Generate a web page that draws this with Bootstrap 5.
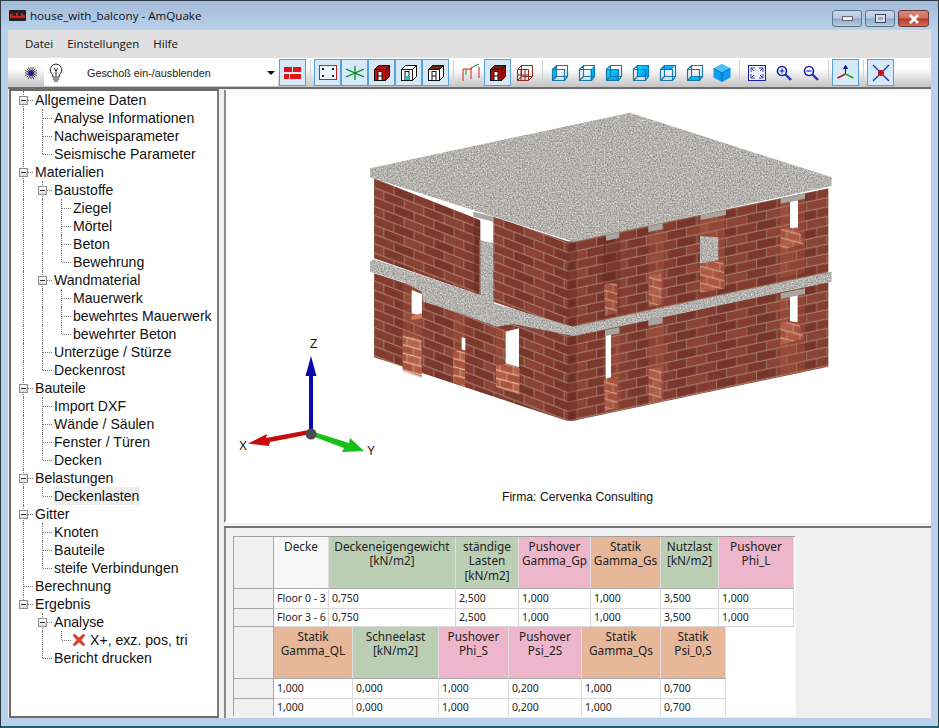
<!DOCTYPE html>
<html lang="de">
<head>
  <meta charset="UTF-8" />
  <title>house_with_balcony - AmQuake</title>
  <link href="https://cdn.jsdelivr.net/npm/bootstrap@5.3.0/dist/css/bootstrap.min.css" rel="stylesheet" />
  <style>
    html, body { height: 100%; margin: 0; background: #3a4048; overflow: hidden; }
    .app-win { width: 939px; height: 728px; background: #b9d1ea; border: 1px solid #2c3a44; border-radius: 6px 6px 0 0; border-bottom: 2px solid #1f5f73; }
    .title-bar { height: 29px; flex: none; padding: 0 9px 0 8px; background: linear-gradient(#a3bbd8, #b9d1ea); font: 11.6px "Open Sans", sans-serif; color: #111; }
    .win-btn { height: 17px; border: 1px solid #5c7388; border-radius: 3px; background: linear-gradient(#c8d8ea 0, #b4c8de 48%, #8ea9c6 52%, #b4cce4 100%); }
    .win-btn.b-close { width: 31px; margin-left: 3px; background: linear-gradient(#dc8a7c 0, #cf6b5c 48%, #b8392b 52%, #cf6a50 100%); border-color: #6b3a36; }
    .win-btn.b-norm { width: 30px; margin-left: 3px; }
    .client { margin: 0 7px 8px; flex: 1; min-height: 0; background: #f0f0f0; }
    .menu-bar { height: 28px; flex: none; background: #e0e0e0; padding: 0 0 2px 17px; gap: 14px; font: 11.5px "Open Sans", sans-serif; color: #111; }
    .tool-bar { height: 31px; flex: none; background: linear-gradient(#fff 0, #fff 35%, #c4c4c4 100%); border-bottom: 2px solid #6e6e6e; padding: 0 0 0 13px; }
    .tool-cell { width: 27px; height: 27px; flex: none; display: flex; align-items: center; justify-content: center; border: 1px solid transparent; }
    .tool-cell.on { background: #d6e9f9; border-color: #5a9fe0; }
    .tool-sep { width: 1px; height: 26px; background: #d2d2d2; flex: none; margin: 0 3px 0 4px; }
    .bug-icon { margin-left: 3px; flex: none; }
    .floor-combo { width: 234px; height: 27px; flex: none; background: #fff; margin-left: 6px; margin-right: 1px; font: 10.8px "Liberation Sans", sans-serif; color: #222; position: relative; }
    .floor-combo .bulb { margin-left: 5px; }
    .floor-combo .cap { margin-left: 24px; }
    .floor-combo .drop { position: absolute; right: 3px; top: 12px; width: 0; height: 0; border: 4px solid transparent; border-top: 4px solid #111; border-bottom: 0; }
    .tree-pane { width: 210px; flex: none; margin-left: 1px; background: #fff; border: 2px solid #6a6a6a; border-right-color: #7a7a7a; padding: 0 0 0 3px; font: 14.1px "Liberation Sans", sans-serif; color: #111; }
    .tree-row { height: 18px; line-height: 18px; white-space: nowrap; }
    .tree-cell { width: 19px; height: 18px; flex: none; position: relative; }
    .tree-cell.v::before { content: ""; position: absolute; left: 9px; top: 0; bottom: 0; border-left: 1px dotted #777; }
    .tree-cell.l::before { content: ""; position: absolute; left: 9px; top: 0; height: 9px; border-left: 1px dotted #777; }
    .tree-cell.h::after { content: ""; position: absolute; left: 10px; width: 9px; top: 9px; border-top: 1px dotted #777; }
    .tree-box { position: absolute; left: 5px; top: 5px; width: 9px; height: 9px; border: 1px solid #8d8d8d; background: linear-gradient(#fff, #ddd); z-index: 1; }
    .tree-box::after { content: ""; position: absolute; left: 1px; right: 1px; top: 3px; border-top: 1px solid #333; }
    .tree-label { padding: 0 1px; margin-left: 1px; }
    .tree-label.sel { background: #f0f0f0; }
    .x-mark { margin: 2px 2px 0 1px; flex: none; }
    .split-v { width: 5px; flex: none; }
    .view-pane { height: 433px; flex: none; margin-top: 1px; background: #fff; border-left: 2px solid #8a8a8a; border-bottom: 2px solid #fff; position: relative; }
    .view-pane svg { display: block; }
    .split-h { height: 5px; flex: none; background: #f4f4f4; border-bottom: 2px solid #777; }
    .grid-pane { flex: 1; min-height: 0; background: #f0f0f0; border-left: 2px solid #8a8a8a; padding: 8px 0 0 7px; font: 10.5px "Noto Sans", sans-serif; color: #222; }
    .grid-box { width: 562px; height: 180px; border: 1px solid #a0a0a0; border-width: 1px 0 0 1px; overflow: hidden; background: #fff; box-shadow: 1px 1px 0 #f8f8f8; }
    .grid-row { display: flex; }
    .grid-row.r-last .grid-cell { height: 18px; padding-top: 0; }
    .grid-cell { flex: none; border-right: 1px solid #d9d9d9; border-bottom: 1px solid #d9d9d9; padding: 1px 0 0 3px; height: 20px; line-height: 16px; white-space: nowrap; overflow: hidden; background: #fff; }
    .grid-cell.hd { height: 52px; text-align: center; font-size: 11.8px; line-height: 14.3px; padding: 2px 0 0; white-space: normal; border-color: #aaa; border-right-color: #dfdfdf; border-bottom-color: #a8a8a8; }
    .grid-cell.rh { background: #f0f0f0; border-right-color: #a8a8a8; border-bottom-color: #a8a8a8; }
    .c-plain { background: #f7f7f7; }
    .c-green { background: #bbcfb5; }
    .c-pink { background: #eeb6ca; }
    .c-tan { background: #e6b798; }
    .firma { position: absolute; left: 0; right: 0; top: 400px; text-align: center; font: 12.2px "Liberation Sans", sans-serif; color: #111; padding-right: 2px; }
    .ax-txt { font: 12px "Liberation Sans", sans-serif; fill: #111; }
  </style>
</head>
<body>
<div class="app-win d-flex flex-column">

  <div class="title-bar d-flex align-items-center">
    <svg width="17" height="11" viewBox="0 0 17 11" class="me-1"><rect width="17" height="11" rx="1" fill="#222"/><path d="M1 8V4h3v2h3V3h2v3h3V3h2v2h2v3z" fill="#d81c1c"/></svg>
    <span class="flex-grow-1">house_with_balcony - AmQuake</span>
    <div class="d-flex align-self-start" style="margin-top:9px">
      <div class="win-btn b-norm d-flex align-items-center justify-content-center"><svg width="11" height="5"><rect x=".5" y=".5" width="10" height="4" fill="#eef" stroke="#667"/></svg></div>
      <div class="win-btn b-norm d-flex align-items-center justify-content-center"><svg width="11" height="9"><rect x=".5" y=".5" width="10" height="8" fill="#dde" stroke="#445"/><rect x="3" y="3" width="5" height="3" fill="#9ab"/></svg></div>
      <div class="win-btn b-close d-flex align-items-center justify-content-center"><svg width="12" height="10"><path d="M2 1l8 8M10 1l-8 8" stroke="#fff" stroke-width="2.6"/></svg></div>
    </div>
  </div>

  <div class="client d-flex flex-column">
    <div class="menu-bar d-flex align-items-center">
      <span>Datei</span><span>Einstellungen</span><span>Hilfe</span>
    </div>

    <div class="tool-bar d-flex align-items-center" id="toolbar">
      <svg width="14" height="14" viewBox="0 0 16 16" class="bug-icon"><path d="M8 1v14M1 8h14M3 3l10 10M13 3L3 13M5 1l6 14M11 1L5 15M1 5l14 6M1 11l14-6" stroke="#222" stroke-width=".9"/><circle cx="8" cy="8" r="3" fill="#16169a"/></svg>
      <div class="floor-combo d-flex align-items-center">
        <svg class="bulb" width="14" height="19" viewBox="0 0 14 19"><path d="M7 1a6 6 0 0 0-3.4 10.8V14h6.8v-2.2A6 6 0 0 0 7 1z" fill="#fff" stroke="#222"/><path d="M5 5l2 3 2-3M7 8v5M4 16h6M5 18h4" stroke="#222" fill="none"/></svg>
        <span class="cap">Geschoß ein-/ausblenden</span>
        <span class="drop"></span>
      </div>
    </div>

    <div class="d-flex flex-grow-1" style="min-height:0">
      <div class="tree-pane" id="tree"></div>
      <div class="split-v"></div>
      <div class="d-flex flex-column flex-grow-1" style="min-width:0">
        <div class="view-pane">
          <svg width="704" height="431" viewBox="226 90 704 431">
            <defs>
              <pattern id="brickL" width="120" height="56" patternUnits="userSpaceOnUse" patternTransform="translate(42 235) skewY(21)">
                <rect width="120" height="56" fill="#ab8c78"/>
                <rect x="1" y="1" width="58" height="25" fill="#843c30"/><rect x="61" y="1" width="58" height="25" fill="#78352a"/>
                <rect x="-29" y="29" width="58" height="25" fill="#8a4437"/><rect x="31" y="29" width="58" height="25" fill="#7e392e"/><rect x="91" y="29" width="58" height="25" fill="#8a4437"/>
              </pattern>
              <pattern id="brickR" width="120" height="56" patternUnits="userSpaceOnUse" patternTransform="translate(650 425) skewY(-12)">
                <rect width="120" height="56" fill="#a98a76"/>
                <rect x="1" y="1" width="58" height="25" fill="#843c30"/><rect x="61" y="1" width="58" height="25" fill="#76342a"/>
                <rect x="-29" y="29" width="58" height="25" fill="#8a4335"/><rect x="31" y="29" width="58" height="25" fill="#7c382e"/><rect x="91" y="29" width="58" height="25" fill="#8a4335"/>
              </pattern>
              <pattern id="brickS" width="80" height="50" patternUnits="userSpaceOnUse" patternTransform="skewY(15)">
                <rect width="80" height="50" fill="#dcb8a0"/>
                <rect x="1" y="2" width="38" height="21" fill="#b45c45"/><rect x="41" y="2" width="38" height="21" fill="#a8533d"/>
                <rect x="-19" y="27" width="38" height="21" fill="#b86249"/><rect x="21" y="27" width="38" height="21" fill="#ac563f"/><rect x="61" y="27" width="38" height="21" fill="#b86249"/>
              </pattern>
              <filter id="granite" x="0" y="0" width="100%" height="100%" color-interpolation-filters="sRGB">
                <feTurbulence type="fractalNoise" baseFrequency="0.22" numOctaves="3" seed="5" result="n"/>
                <feColorMatrix in="n" type="matrix" values="0 0 0 .5 .455  0 0 0 .5 .45  0 0 0 .5 .435  0 0 0 0 1" result="g"/>
                <feComposite in="g" in2="SourceGraphic" operator="in"/>
              </filter>
            </defs>

            <g transform="translate(360 100) scale(.33333)">
              <!-- lower storey -->
              <polygon points="42,520 640,708 640,962 620,962 42,772" fill="url(#brickL)"/>
              <polygon points="625,708 1405,545 1405,800 640,962 625,962" fill="url(#brickR)"/>
              <!-- upper storey -->
              <polygon points="42,235 360,360 360,585 42,475" fill="url(#brickL)"/>
              <polygon points="358,420 402,430 402,612 358,590" fill="#b5b4b0" filter="url(#granite)"/>
              <polygon points="400,350 640,430 640,690 400,605" fill="url(#brickL)"/>
              <polygon points="625,425 1405,265 1405,530 625,695" fill="url(#brickR)"/>
              <!-- darker corner bands -->
              <polygon points="340,355 362,362 362,585 340,578" fill="#5f261c" opacity=".45"/>
              <polygon points="622,425 650,425 650,695 622,690" fill="#5f261c" opacity=".35"/>
              <polygon points="622,708 650,708 650,962 622,962" fill="#5f261c" opacity=".35"/>
              <polygon points="730,415 780,402 780,640 730,650" fill="#5f261c" opacity=".35"/>
              <polygon points="865,388 912,378 912,615 865,625" fill="#b76045" opacity=".3"/>
              <polygon points="1020,350 1095,335 1095,565 1020,580" fill="#b76045" opacity=".4"/>
              <polygon points="1260,300 1335,285 1335,520 1260,535" fill="#b76045" opacity=".35"/>
              <polygon points="730,705 780,695 780,925 730,935" fill="#b76045" opacity=".3"/>
              <polygon points="865,678 912,668 912,900 865,910" fill="#b76045" opacity=".3"/>
              <polygon points="1260,580 1335,565 1335,815 1260,830" fill="#b76045" opacity=".35"/>
              <polygon points="128,545 185,565 185,835 128,815" fill="#b76045" opacity=".3"/>
              <polygon points="280,640 315,650 315,860 280,845" fill="#b76045" opacity=".25"/>
              <polygon points="408,690 478,690 478,885 408,860" fill="#b76045" opacity=".25"/>

              <!-- openings -->
              <polygon points="155,570 186,582 186,648 155,640" fill="#fff"/>
              <polygon points="305,712 316,715 316,752 305,748" fill="#fff"/>
              <polygon points="437,695 477,685 477,802 437,790" fill="#fff"/>
              <polygon points="737,707 753,703 753,832 737,836" fill="#fff"/>
              <polygon points="1290,588 1313,583 1313,667 1290,664" fill="#fff"/>
              <polygon points="1290,305 1314,300 1314,386 1290,383" fill="#fff"/>
              <polygon points="1020,408 1075,412 1075,480 1020,492" fill="#b5b4b0" filter="url(#granite)"/>

              <!-- sills -->
              <polygon points="128,702 185,720 185,830 128,810" fill="url(#brickS)"/>
              <polygon points="155,648 186,640 186,655 155,660" fill="#d87a5e"/>
              <polygon points="280,755 315,750 315,860 280,845" fill="url(#brickS)"/>
              <polygon points="408,798 440,792 478,804 478,885 408,860" fill="url(#brickS)"/>
              <g opacity=".75">
                <polygon points="732,552 772,548 772,640 735,648" fill="url(#brickS)"/>
                <polygon points="732,838 772,832 772,925 735,933" fill="url(#brickS)"/>
                <polygon points="866,525 905,520 905,612 866,620" fill="url(#brickS)"/>
                <polygon points="866,808 905,802 905,898 866,908" fill="url(#brickS)"/>
                <polygon points="1020,490 1090,482 1095,565 1020,578" fill="url(#brickS)"/>
                <polygon points="1262,388 1315,382 1332,432 1262,450" fill="url(#brickS)"/>
                <polygon points="1262,668 1315,665 1332,715 1262,735" fill="url(#brickS)"/>
              </g>

              <!-- middle slab -->
              <polygon points="30,485 42,478 360,585 400,610 640,680 1415,515 1415,545 640,708 460,672 410,680 300,640 190,605 185,575 130,545 30,515" fill="#c2c1bd" filter="url(#granite)"/>
              <!-- beams -->
              <polygon points="735,690 778,682 778,700 735,708" fill="#a6a5a1"/>
              <polygon points="865,660 908,652 908,670 865,678" fill="#a6a5a1"/>
              <polygon points="1262,580 1335,565 1335,582 1262,597" fill="#a6a5a1"/>
              <polygon points="738,405 778,397 778,414 738,422" fill="#a6a5a1"/>
              <polygon points="865,378 908,370 908,388 865,396" fill="#a6a5a1"/>
              <polygon points="1022,345 1098,330 1098,345 1022,360" fill="#a6a5a1"/>
              <polygon points="1262,295 1335,280 1335,296 1262,311" fill="#a6a5a1"/>
              <polygon points="340,335 400,350 400,365 340,350" fill="#a6a5a1"/>

              <!-- roof slab -->
              <polygon points="810,38 1415,232 1415,258 640,425 30,232 30,205" fill="#b8b7b3" filter="url(#granite)"/>
            </g>

            <!-- axes -->
            <path d="M311 356l-5.500 20h3.500v56h4v-56h3.500z" fill="#0a0ab4"/>
            <path d="M309 430l-43 8 1-4-19 9.500 21 2.500 1-4 41-8z" fill="#c80a0a"/>
            <path d="M314 432l35 11 1-5 14 13-22 1 2-4-32-12z" fill="#16c016"/>
            <circle cx="311" cy="434" r="5.500" fill="#4a4a52"/>
            <text class="ax-txt" x="310" y="348">Z</text>
            <text class="ax-txt" x="239" y="450">X</text>
            <text class="ax-txt" x="367" y="455">Y</text>
          </svg>
          <div class="firma">Firma: Cervenka Consulting</div>
        </div>
        <div class="split-h"></div>
        <div class="grid-pane">
          <div class="grid-box" id="grid"></div>
        </div>
      </div>
    </div>
  </div>
</div>

<script src="https://cdn.jsdelivr.net/npm/bootstrap@5.3.0/dist/js/bootstrap.bundle.min.js"></script>
<script>
  // ---- tree on the left
  const tree = [
    ["Allgemeine Daten", [["Analyse Informationen"], ["Nachweisparameter"], ["Seismische Parameter"]]],
    ["Materialien", [
      ["Baustoffe", [["Ziegel"], ["Mörtel"], ["Beton"], ["Bewehrung"]]],
      ["Wandmaterial", [["Mauerwerk"], ["bewehrtes Mauerwerk"], ["bewehrter Beton"]]],
      ["Unterzüge / Stürze"], ["Deckenrost"]]],
    ["Bauteile", [["Import DXF"], ["Wände / Säulen"], ["Fenster / Türen"], ["Decken"]]],
    ["Belastungen", [["Deckenlasten"]]],
    ["Gitter", [["Knoten"], ["Bauteile"], ["steife Verbindungen"]]],
    ["Berechnung"],
    ["Ergebnis", [["Analyse", [["X+, exz. pos, tri"]]], ["Bericht drucken"]]]
  ];
  const treeEl = document.getElementById("tree");

  function addRows(items, guides) {
    items.forEach((item, i) => {
      const last = i === items.length - 1;
      const kids = item[1];
      let html = guides.map(g => `<div class="tree-cell ${g ? "v" : ""}"></div>`).join("");
      html += `<div class="tree-cell ${last ? "l" : "v"} h">${kids ? '<div class="tree-box"></div>' : ""}</div>`;
      if (item[0].startsWith("X+")) {
        html += `<svg class="x-mark" width="14" height="14" viewBox="0 0 14 14"><path d="M2.500 1L7 5l4.500-4L13 2.500 9 7l4 4.500-1.500 1.500L7 9l-4.500 4L1 11.500 5 7 1 2.500z" fill="#e2402c" stroke="#b9301f" stroke-width=".6"/></svg>`;
      }
      const sel = item[0] === "Deckenlasten" ? " sel" : "";
      html += `<span class="tree-label${sel}">${item[0]}</span>`;
      const row = document.createElement("div");
      row.className = "tree-row d-flex";
      row.innerHTML = html;
      treeEl.appendChild(row);
      if (kids) addRows(kids, guides.concat(!last));
    });
  }
  addRows(tree, []);

  // ---- toolbar icons
  const cube = (faces, stroke) => `<svg width="18" height="18" viewBox="0 0 18 18" fill="none" stroke="${stroke}"><defs><linearGradient id="cy" x1="0" x2="1" y1="0" y2="1"><stop offset="0" stop-color="#00e0ff"/><stop offset="1" stop-color="#0090f0"/></linearGradient></defs>${faces}</svg>`;
  const frame = `<path d="M1.500 5.500h12v11h-12zM1.500 5.500l4-4h11v11l-3 4M5.500 1.500v11h11M5.500 12.500l-4 4"/>`;
  const blue = f => cube(`<path d="${f}" fill="url(#cy)" stroke="none"/>` + `<g stroke-width="1.200">${frame}</g>`, "#1678ae");
  const solidBox = (top, front, side, door) => `<svg width="18" height="18" viewBox="0 0 18 18" stroke="#111"><path d="M1.500 5.500l4-4h11l-4 4z" fill="${top}"/><rect x="1.500" y="5.500" width="11" height="11" fill="${front}"/><path d="M12.500 5.500l4-4v11l-4 4z" fill="${side}"/>${door}</svg>`;
  const doorW = `<rect x="5" y="7.500" width="4" height="9" fill="#fff"/><path d="M5 12h4" />`;
  const doorC = `<rect x="5" y="7.500" width="4" height="9" fill="#fff"/><rect x="5.500" y="12" width="3" height="4" fill="#18c8d8" stroke="none"/>`;

  const tools = [
    ["on", `<svg width="17" height="12" viewBox="0 0 17 12"><path d="M0 0h8v5H0zM9 0h8v5H9zM0 7h5v5H0zM6 7h11v5H6z" fill="#e01414"/></svg>`],
    ["sep"],
    ["on", `<svg width="18" height="16" viewBox="0 0 18 16"><rect x=".5" y=".5" width="17" height="14" fill="#eef5fb" stroke="#c02020"/><path d="M3 3h2v2H3zM13 3h2v2h-2zM3 10h2v2H3zM13 10h2v2h-2z" fill="#14147a"/></svg>`],
    ["on", `<svg width="18" height="14" viewBox="0 0 18 14"><path d="M9 0v14M0 3l18 8M0 11l18-8" stroke="#0c8a1c" stroke-width="1.300"/></svg>`],
    ["on", solidBox("#b01010", "#c80e0e", "#a80808", doorW)],
    ["on", solidBox("#fff", "#fff", "#fff", doorC)],
    ["on", solidBox("#6a2a12", "#fff", "#fff", doorW)],
    ["sep"],
    ["", `<svg width="18" height="19" viewBox="0 0 18 19" fill="none" stroke="#d01e1e"><path d="M1 18V6h9M9 5v11M17 4v11"/><path d="M4 12V6M9 5l8-4" stroke="#1a8a1a"/></svg>`],
    ["on", solidBox("#5c2810", "#c00808", "#a00808", doorW)],
    ["", `<svg width="18" height="18" viewBox="0 0 18 18" fill="none" stroke="#8f2a20"><path d="M1.500 5.500h11v11h-11zM1.500 5.500l4-4h11v11l-4 4M5.500 1.500v11h11M5.500 12.500l-4 4M5 5.500v11M9 5.500v11M1.500 11h11"/></svg>`],
    ["sep"],
    ["", blue("M1.500 5.500l4-4v11l-4 4z")],
    ["", blue("M12.500 5.500l4-4v11l-4 4z")],
    ["", blue("M1.500 5.500h12v11h-12z")],
    ["", blue("M5.500 1.500h11v11h-11z")],
    ["", blue("M1.500 5.500l4-4h11l-4 4z")],
    ["", blue("M1.500 16.500l4-4h11l-4 4z")],
    ["", `<svg width="20" height="20" viewBox="0 0 20 20"><path d="M10 1l8.500 4.500v9L10 19l-8.500-4.500v-9z" fill="#0f9cf0"/><path d="M10 1l8.500 4.500L10 10 1.500 5.500z" fill="#46c4f8"/><path d="M1.500 5.500L10 10v9M18.500 5.500L10 10" stroke="#0a6fb4" fill="none"/></svg>`],
    ["sep"],
    ["", `<svg width="18" height="16" viewBox="0 0 18 16"><rect x=".5" y=".5" width="17" height="15" fill="#eef" stroke="#1420a8"/><path d="M3 3h4M3 3v4M15 3h-4M15 3v4M3 13h4M3 13V9M15 13h-4M15 13V9M3 3l3 3M15 3l-3 3M3 13l3-3M15 13l-3-3" stroke="#3a46b8" fill="none"/></svg>`],
    ["", `<svg width="16" height="16" viewBox="0 0 16 16" fill="none"><circle cx="6" cy="6" r="4.500" stroke="#1220b0" stroke-width="1.600" fill="#fff"/><path d="M3.500 6h5M6 3.500v5" stroke="#1220b0" stroke-width="1.200"/><path d="M9.500 9.500l5.500 5.500" stroke="#2030c0" stroke-width="2.400"/></svg>`],
    ["", `<svg width="16" height="16" viewBox="0 0 16 16" fill="none"><circle cx="6" cy="6" r="4.500" stroke="#1220b0" stroke-width="1.600" fill="#fff"/><path d="M3.500 6h5" stroke="#1220b0" stroke-width="1.200"/><path d="M9.500 9.500l5.500 5.500" stroke="#2030c0" stroke-width="2.400"/></svg>`],
    ["sep"],
    ["on", `<svg width="19" height="15" viewBox="0 0 19 15" fill="none"><path d="M9.500 9V1M7.500 3.500l2-3 2 3z" stroke="#101088" fill="#101088"/><path d="M9.500 9L1.500 13" stroke="#c01010" stroke-width="1.500"/><path d="M9.500 9l8 4" stroke="#18b018" stroke-width="1.500"/></svg>`],
    ["sep"],
    ["on", `<svg width="18" height="18" viewBox="0 0 18 18"><path d="M1 1l16 16M17 1L1 17" stroke="#2430a0" stroke-width="1.200"/><circle cx="9" cy="9" r="3" fill="#d01010"/></svg>`]
  ];

  const bar = document.getElementById("toolbar");
  tools.forEach(t => {
    const el = document.createElement("div");
    if (t[0] === "sep") {
      el.className = "tool-sep";
    } else {
      el.className = "tool-cell" + (t[0] ? " " + t[0] : "");
      el.innerHTML = t[1];
    }
    bar.appendChild(el);
  });

  // ---- table at the bottom, wraps to a second block like the real grid
  const blocks = [
    { cols: [
        ["Decke", 55, "c-plain"], ["Deckeneigengewicht<br>[kN/m2]", 127, "c-green"], ["ständige<br>Lasten<br>[kN/m2]", 63, "c-green"],
        ["Pushover<br>Gamma_Gp", 72, "c-pink"], ["Statik<br>Gamma_Gs", 70, "c-tan"], ["Nutzlast<br>[kN/m2]", 58, "c-green"], ["Pushover<br>Phi_L", 75, "c-pink"]],
      rows: [["Floor 0 - 3", "0,750", "2,500", "1,000", "1,000", "3,500", "1,000"], ["Floor 3 - 6", "0,750", "2,500", "1,000", "1,000", "3,500", "1,000"]] },
    { cols: [
        ["Statik<br>Gamma_QL", 79, "c-tan"], ["Schneelast<br>[kN/m2]", 86, "c-green"], ["Pushover<br>Phi_S", 70, "c-pink"],
        ["Pushover<br>Psi_2S", 73, "c-pink"], ["Statik<br>Gamma_Qs", 79, "c-tan"], ["Statik<br>Psi_0,S", 65, "c-tan"]],
      rows: [["1,000", "0,000", "1,000", "0,200", "1,000", "0,700"], ["1,000", "0,000", "1,000", "0,200", "1,000", "0,700"]] }
  ];
  const grid = document.getElementById("grid");
  blocks.forEach(b => {
    let html = `<div class="grid-row"><div class="grid-cell hd rh" style="width:40px"></div>`;
    html += b.cols.map(c => `<div class="grid-cell hd ${c[2]}" style="width:${c[1]}px">${c[0]}</div>`).join("") + "</div>";
    b.rows.forEach((r, n) => {
      html += `<div class="grid-row${n === 1 ? " r-last" : ""}"><div class="grid-cell rh" style="width:40px"></div>`;
      html += r.map((v, i) => `<div class="grid-cell" style="width:${b.cols[i][1]}px">${v}</div>`).join("") + "</div>";
    });
    grid.insertAdjacentHTML("beforeend", html);
  });
</script>
</body>
</html>
